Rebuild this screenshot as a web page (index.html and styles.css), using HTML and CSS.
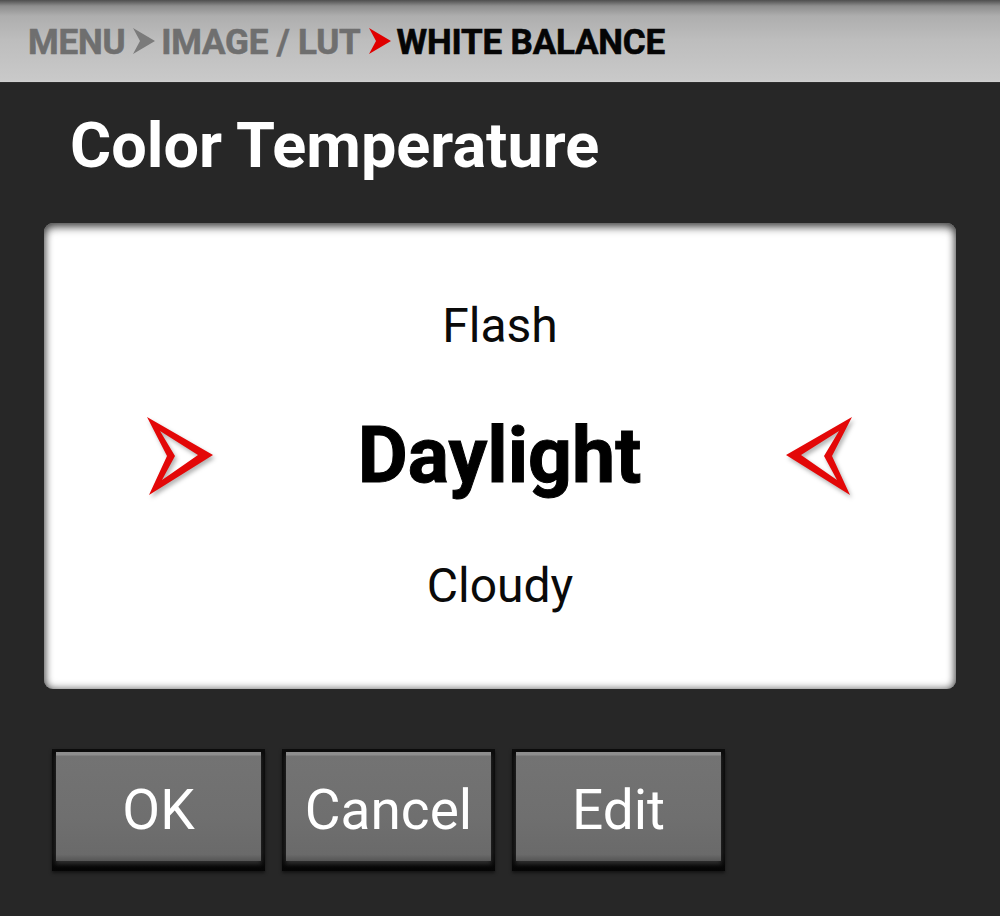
FILE: index.html
```html
<!DOCTYPE html>
<html>
<head>
<meta charset="utf-8">
<link rel="stylesheet" href="styles.css">
</head>
<body>
<div class="screen">
  <header class="crumbs">
    <span class="crumb muted">MENU</span>
    <svg class="sep" width="22" height="26" viewBox="0 0 22 26"><polygon points="0,0 22,13 0,26 7,13" fill="#7b7b7b"/></svg>
    <span class="crumb muted">IMAGE / LUT</span>
    <svg class="sep" width="22" height="26" viewBox="0 0 22 26"><polygon points="0,0 22,13 0,26 7,13" fill="#e00000"/></svg>
    <span class="crumb current">WHITE BALANCE</span>
  </header>

  <h1 class="title">Color Temperature</h1>

  <section class="picker">
    <div class="option">Flash</div>
    <div class="option-row">
      <svg class="nav-arrow" width="66" height="78" viewBox="0 0 66 78"><path fill-rule="evenodd" fill="#e30808" d="M0,0 L66,38 L2,78 L20,39 Z M13,14 L28,39 L15,63 L51,38 Z"/></svg>
      <div class="option selected">Daylight</div>
      <svg class="nav-arrow flip" width="66" height="78" viewBox="0 0 66 78"><path fill-rule="evenodd" fill="#e30808" d="M0,0 L66,38 L2,78 L20,39 Z M13,14 L28,39 L15,63 L51,38 Z"/></svg>
    </div>
    <div class="option">Cloudy</div>
  </section>

  <div class="actions">
    <button class="btn"><span class="btn-face">OK</span></button>
    <button class="btn"><span class="btn-face">Cancel</span></button>
    <button class="btn"><span class="btn-face">Edit</span></button>
  </div>
</div>
</body>
</html>
```

FILE: styles.css
```css
html, body {
  margin: 0;
  padding: 0;
  background: #272727;
}

.screen {
  width: 1000px;
  height: 916px;
  background: #272727;
  font-family: Roboto, "Liberation Sans", sans-serif;
  overflow: hidden;
}

.crumbs {
  height: 83px;
  box-sizing: border-box;
  padding-left: 28px;
  display: flex;
  align-items: center;
  background: linear-gradient(to bottom, #4e4e4e 0px, #8e8e8e 6px, #aeaeae 16px, #bdbdbd 40px, #c9c9c9 80px, #d2d2d2 82px);
  border-bottom: 1px solid #2f2f2f;
}

.crumb {
  font-size: 35px;
  font-weight: 700;
  line-height: 35px;
  padding-top: 2px;
  letter-spacing: -0.2px;
  -webkit-text-stroke: 0.6px currentColor;
}

.crumb.muted {
  color: #6f6f6f;
}

.crumb.current {
  color: #050505;
}

.sep {
  display: block;
  margin: 0 6px 0 8px;
}

.title {
  margin: 32px 0 0 70px;
  color: #ffffff;
  font-size: 63px;
  font-weight: 700;
  line-height: 62px;
}

.picker {
  margin: 46px 0 0 44px;
  width: 912px;
  height: 466px;
  box-sizing: border-box;
  padding: 73px 0;
  background: #ffffff;
  border-radius: 9px;
  box-shadow: inset 0 4px 10px rgba(0, 0, 0, 0.6), inset 0 0 8px rgba(0, 0, 0, 0.5);
  display: flex;
  flex-direction: column;
  gap: 55px;
}

.option {
  text-align: center;
  color: #0a0a0a;
  font-size: 48px;
  line-height: 60px;
}

.option-row {
  height: 90px;
  padding: 0 104px 0 103px;
  display: flex;
  align-items: center;
  justify-content: space-between;
}

.option.selected {
  font-size: 77px;
  font-weight: 700;
  line-height: 90px;
  color: #000000;
  -webkit-text-stroke: 1px #000000;
}

.nav-arrow {
  display: block;
  filter: drop-shadow(2px 3px 2px rgba(0, 0, 0, 0.3));
}

.nav-arrow.flip {
  transform: scaleX(-1);
  filter: drop-shadow(-2px 3px 2px rgba(0, 0, 0, 0.3));
}

.actions {
  margin: 60px 0 0 52px;
  display: flex;
  gap: 17px;
}

.btn {
  width: 213px;
  height: 122px;
  box-sizing: border-box;
  padding: 3px 4px 10px 4px;
  border: none;
  margin: 0;
  background: linear-gradient(to bottom, #0c0c0c 0, #111111 85%, #050505 100%);
  box-shadow: 0 2px 3px rgba(0, 0, 0, 0.5);
  font-family: inherit;
  cursor: pointer;
}

.btn-face {
  display: flex;
  align-items: center;
  justify-content: center;
  height: 100%;
  box-sizing: border-box;
  padding-top: 8px;
  background: linear-gradient(to bottom, #8e8e8e 0, #8e8e8e 3px, #737373 4px, #6f6f6f 60%, #6a6a6a 94%, #555555 100%);
  box-shadow: 0 3px 4px rgba(70, 70, 70, 0.6);
  color: #ffffff;
  font-size: 55px;
  font-weight: 400;
  line-height: 1;
}
```
